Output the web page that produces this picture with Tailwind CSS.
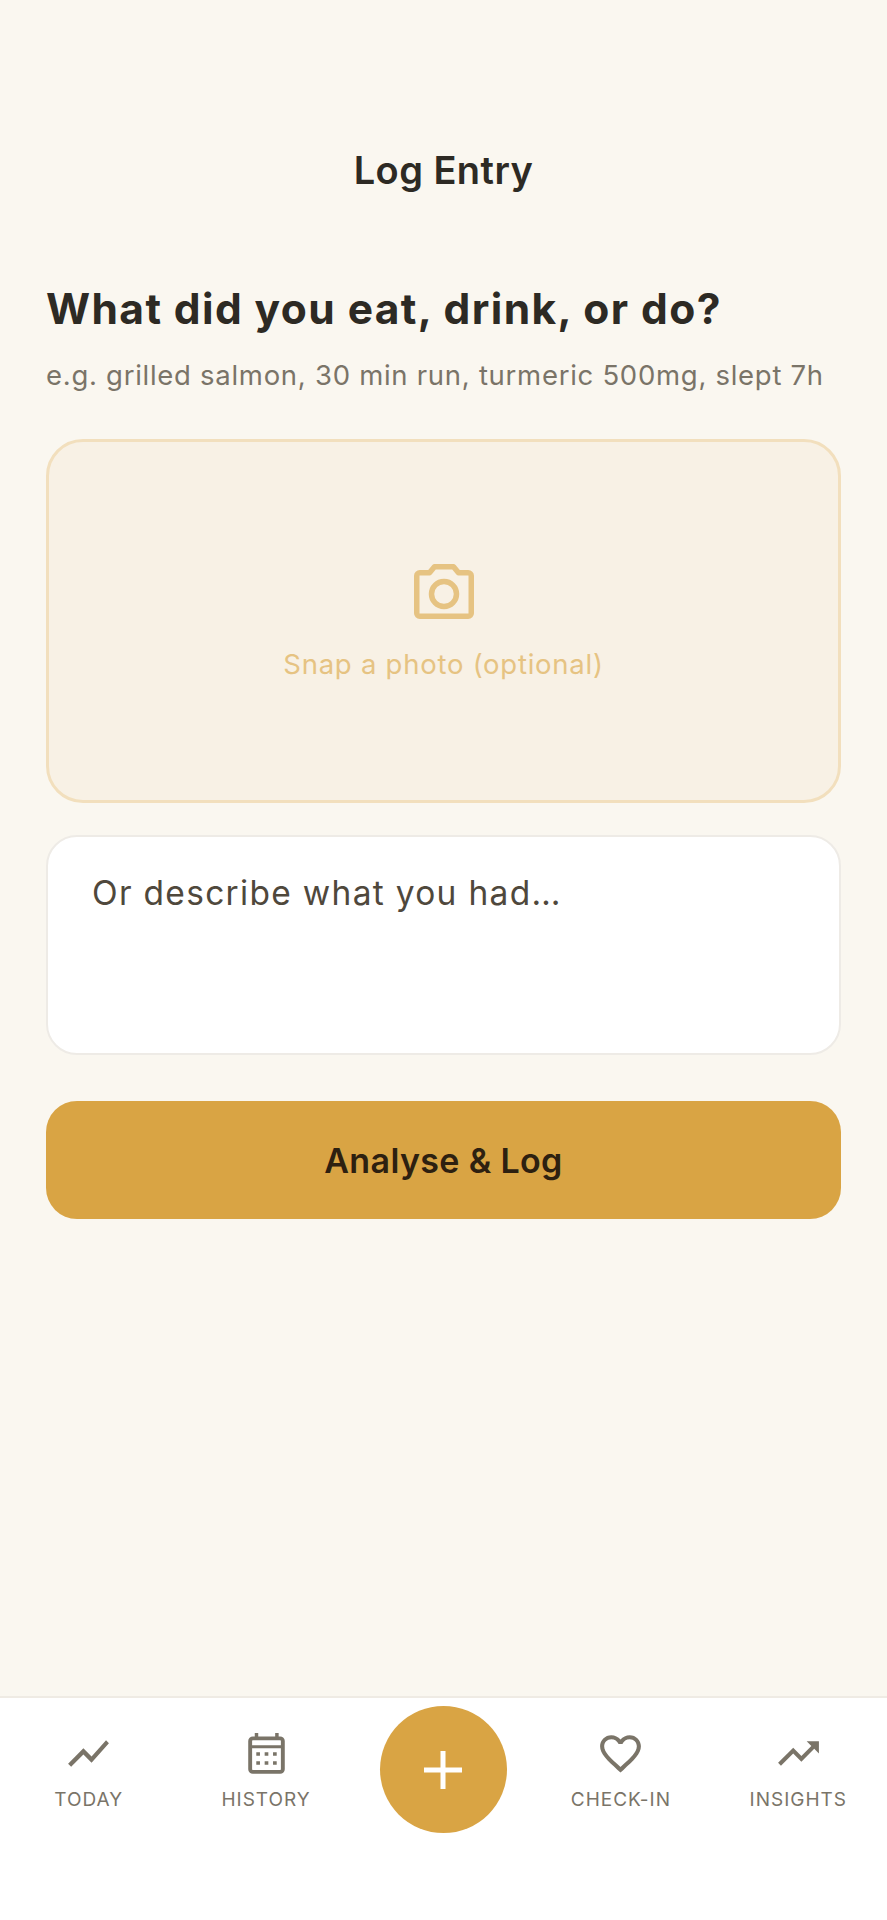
<!DOCTYPE html>
<html lang="en">
<head>
    <meta charset="UTF-8">
    <meta name="viewport" content="width=device-width, initial-scale=1.0">
    <title>Log Entry</title>
    <script src="https://cdn.jsdelivr.net/npm/@tailwindcss/browser@4"></script>
</head>
<body class="bg-[#faf7f0] font-['Inter',sans-serif] h-[1920px] w-[887px] flex flex-col overflow-hidden">
    <main class="flex-1 flex flex-col px-[46px]">
        <h1 class="mt-[147px] h-[46px] leading-[46px] text-center text-[38px] font-semibold text-[#2d2a24] tracking-[0.45px]">Log Entry</h1>
        <h2 class="mt-[89px] h-[54px] leading-[54px] text-[42.5px] font-bold text-[#2d2a24] tracking-[1.4px]">What did you eat, drink, or do?</h2>
        <p class="mt-[20px] h-[38px] leading-[38px] text-[27.5px] text-[#7a7468] tracking-[0.72px] whitespace-nowrap">e.g. grilled salmon, 30 min run, turmeric 500mg, slept 7h</p>
        <div class="mt-[45px] h-[364px] rounded-[37px] border-[3.5px] border-[#f2dfbd] bg-[#f8f1e5] flex flex-col items-center justify-center pt-[5px]">
            <svg class="w-[60px] h-[55px]" viewBox="0 0 60 55" fill="none" stroke="#e6c382" stroke-width="5.5" stroke-linejoin="round">
                <path d="M5.75 8.75H15.5L20.5 2.75H39.5L44.5 8.75H54.25a3 3 0 0 1 3 3V49.25a3 3 0 0 1-3 3H5.75a3 3 0 0 1-3-3V11.75a3 3 0 0 1 3-3z"/>
                <circle cx="30" cy="30" r="12.5"/>
            </svg>
            <span class="mt-[26px] text-[27.5px] leading-[38px] text-[#e6c382] tracking-[0.75px]">Snap a photo (optional)</span>
        </div>
        <div class="mt-[32px] h-[220px] rounded-[31px] border-[2.5px] border-[#eeebe6] bg-white pl-[44px] pt-[34px]">
            <span class="text-[33.5px] leading-[44px] text-[#4f483c] tracking-[1.3px]">Or describe what you had…</span>
        </div>
        <button class="mt-[46px] h-[118px] rounded-[31px] bg-[#d9a444] text-[34px] font-semibold text-[#2d2010] tracking-[0.35px]">Analyse &amp; Log</button>
    </main>
    <nav class="h-[224px] bg-white border-t-[2px] border-[#efebe4] grid grid-cols-5">
        <div class="flex flex-col items-center pt-[31px]">
            <svg class="w-[49px] h-[49px]" viewBox="0 0 24 24" fill="#7a7468">
                <path d="M3.5 18.49l6-6.01 4 4L22 6.92l-1.41-1.41-7.09 7.97-4-4L2 16.99z"/>
            </svg>
            <span class="mt-[9px] text-[19px] leading-[26px] text-[#7a7468] tracking-[1px]">TODAY</span>
        </div>
        <div class="flex flex-col items-center pt-[31px]">
            <svg class="w-[49px] h-[49px]" viewBox="0 0 24 24" fill="none" stroke="#7a7468" stroke-width="1.9">
                <rect x="4" y="4.6" width="16" height="16.4" rx="1.3"/>
                <path stroke-width="1.4" d="M4 8.7h16"/>
                <path stroke-width="1.7" d="M7.1 2v3M17.1 2v3"/>
                <path stroke-width="1.7" d="M7 12.2h1.8M11.1 12.2h1.8M15.2 12.2h1.8M7 16.6h1.8M11.1 16.6h1.8M15.2 16.6h1.8"/>
            </svg>
            <span class="mt-[9px] text-[19px] leading-[26px] text-[#7a7468] tracking-[1px]">HISTORY</span>
        </div>
        <div class="flex justify-center pt-[8px]">
            <div class="w-[127px] h-[127px] rounded-full bg-[#d9a444] flex items-center justify-center">
                <svg class="w-[38px] h-[38px]" viewBox="0 0 38 38" fill="none" stroke="#ffffff" stroke-width="5">
                    <path d="M19 0v38M0 19h38"/>
                </svg>
            </div>
        </div>
        <div class="flex flex-col items-center pt-[31px]">
            <svg class="w-[49px] h-[49px]" viewBox="0 0 24 24" fill="#7a7468">
                <path d="M16.5 3c-1.74 0-3.41.81-4.5 2.09C10.91 3.81 9.24 3 7.5 3 4.42 3 2 5.42 2 8.5c0 3.78 3.4 6.86 8.55 11.54L12 21.35l1.45-1.32C18.6 15.36 22 12.28 22 8.5 22 5.42 19.58 3 16.5 3zm-4.4 15.55l-.1.1-.1-.1C7.14 14.24 4 11.39 4 8.5 4 6.5 5.5 5 7.5 5c1.54 0 3.04.99 3.57 2.36h1.87C13.46 5.99 14.96 5 16.5 5c2 0 3.5 1.5 3.5 3.5 0 2.89-3.14 5.74-7.9 10.05z"/>
            </svg>
            <span class="mt-[9px] text-[19px] leading-[26px] text-[#7a7468] tracking-[1px]">CHECK-IN</span>
        </div>
        <div class="flex flex-col items-center pt-[31px]">
            <svg class="w-[49px] h-[49px]" viewBox="0 0 24 24" fill="#7a7468">
                <path d="M16 6l2.29 2.29-4.88 4.88-4-4L2 16.59 3.41 18l6-6 4 4 6.3-6.29L22 12V6z"/>
            </svg>
            <span class="mt-[9px] text-[19px] leading-[26px] text-[#7a7468] tracking-[1px]">INSIGHTS</span>
        </div>
    </nav>
</body>
</html>
